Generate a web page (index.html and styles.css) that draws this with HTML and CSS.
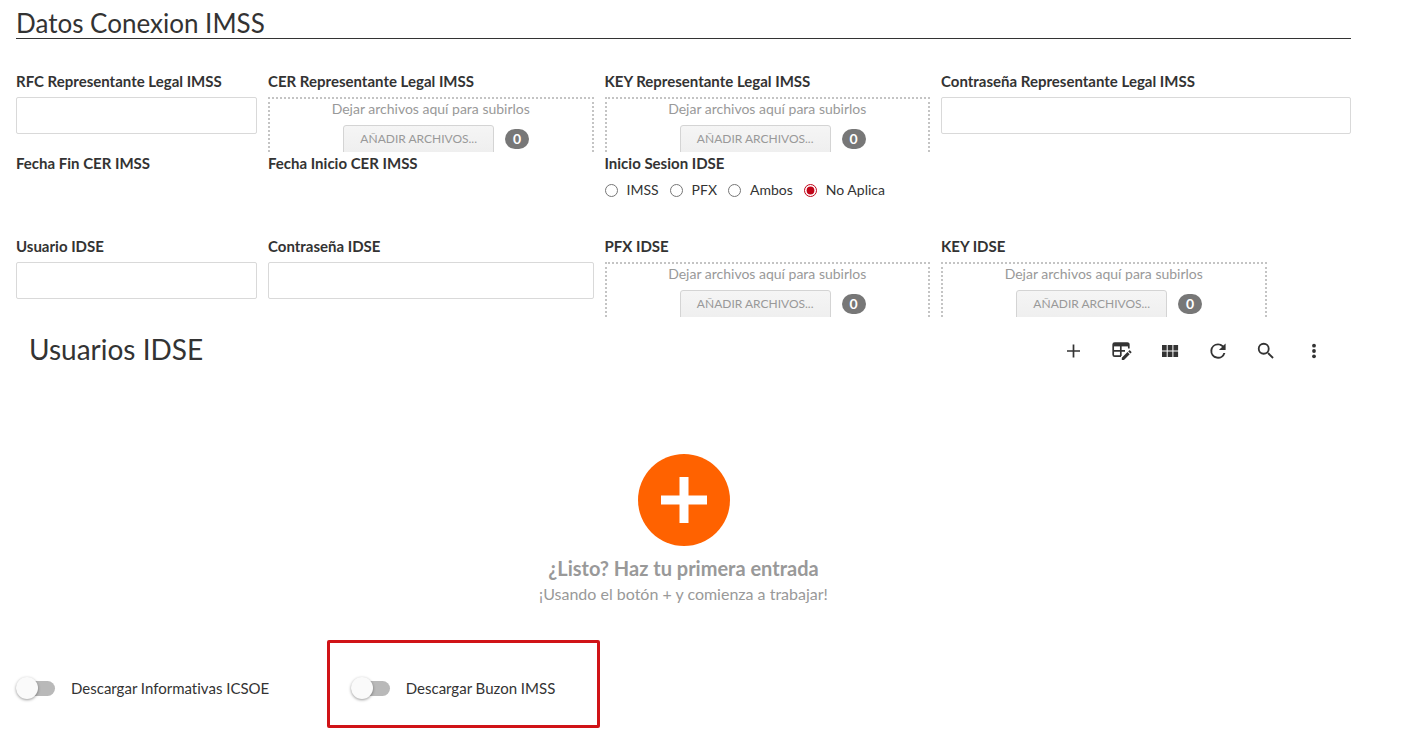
FILE: index.html
```html
<!DOCTYPE html>
<html lang="es">
<head>
<meta charset="utf-8">
<meta name="viewport" content="width=device-width, initial-scale=1">
<title>Datos Conexion IMSS</title>
<link rel="stylesheet" href="styles.css">
</head>
<body>
<main class="page">
  <h1 class="section-title">Datos Conexion IMSS</h1>

  <form class="form-grid">
    <div class="field">
      <label class="field-label" for="rfc">RFC Representante Legal IMSS</label>
      <input class="text-input" id="rfc" type="text">
    </div>
    <div class="field" role="group" aria-labelledby="cer-label">
      <span class="field-label" id="cer-label">CER Representante Legal IMSS</span>
      <div class="dropzone">
        <span class="dropzone-hint">Dejar archivos aquí para subirlos</span>
        <div class="dropzone-actions"><button class="add-files" type="button">AÑADIR ARCHIVOS...</button><span class="count">0</span></div>
      </div>
    </div>
    <div class="field" role="group" aria-labelledby="key-label">
      <span class="field-label" id="key-label">KEY Representante Legal IMSS</span>
      <div class="dropzone">
        <span class="dropzone-hint">Dejar archivos aquí para subirlos</span>
        <div class="dropzone-actions"><button class="add-files" type="button">AÑADIR ARCHIVOS...</button><span class="count">0</span></div>
      </div>
    </div>
    <div class="field field-wide">
      <label class="field-label" for="rep-pass">Contraseña Representante Legal IMSS</label>
      <input class="text-input" id="rep-pass" type="password">
    </div>

    <div class="field row-start"><span class="field-label">Fecha Fin CER IMSS</span></div>
    <div class="field"><span class="field-label">Fecha Inicio CER IMSS</span></div>
    <div class="field field-wide" role="radiogroup" aria-labelledby="login-label">
      <span class="field-label" id="login-label">Inicio Sesion IDSE</span>
      <div class="radios">
        <label class="radio-option"><input class="radio" type="radio" name="login">IMSS</label>
        <label class="radio-option"><input class="radio" type="radio" name="login">PFX</label>
        <label class="radio-option"><input class="radio" type="radio" name="login">Ambos</label>
        <label class="radio-option"><input class="radio" type="radio" name="login" checked>No Aplica</label>
      </div>
    </div>

    <div class="field row-start">
      <label class="field-label" for="idse-user">Usuario IDSE</label>
      <input class="text-input" id="idse-user" type="text">
    </div>
    <div class="field">
      <label class="field-label" for="idse-pass">Contraseña IDSE</label>
      <input class="text-input" id="idse-pass" type="password">
    </div>
    <div class="field" role="group" aria-labelledby="pfx-idse-label">
      <span class="field-label" id="pfx-idse-label">PFX IDSE</span>
      <div class="dropzone">
        <span class="dropzone-hint">Dejar archivos aquí para subirlos</span>
        <div class="dropzone-actions"><button class="add-files" type="button">AÑADIR ARCHIVOS...</button><span class="count">0</span></div>
      </div>
    </div>
    <div class="field" role="group" aria-labelledby="key-idse-label">
      <span class="field-label" id="key-idse-label">KEY IDSE</span>
      <div class="dropzone">
        <span class="dropzone-hint">Dejar archivos aquí para subirlos</span>
        <div class="dropzone-actions"><button class="add-files" type="button">AÑADIR ARCHIVOS...</button><span class="count">0</span></div>
      </div>
    </div>
  </form>

  <section class="users">
    <header class="users-header">
      <h2 class="users-title">Usuarios IDSE</h2>
      <div class="toolbar">
        <button class="tool" type="button" aria-label="Agregar"><svg class="icon" viewBox="0 0 20 20"><path d="M9.500 3.500v13M3 10h13" fill="none" stroke="currentColor" stroke-width="1.700"/></svg></button>
        <button class="tool" type="button" aria-label="Editar en tabla"><svg class="icon" viewBox="0 0 20 20"><path d="M9 15.200H2.700a1.500 1.500 0 0 1-1.500-1.500V3.500A1.500 1.500 0 0 1 2.700 2h12.600a1.500 1.500 0 0 1 1.500 1.500V7.500M1.500 9.800h11.500M8.800 4v11" fill="none" stroke="currentColor" stroke-width="1.700"/><path d="M1 2h16v3.400H1z" fill="currentColor"/><path d="M9.800 16.800l5.700-5.700 2.200 2.200-5.700 5.700H9.800zM16.200 10.400l.9-.9c.3-.3.700-.3 1 0l1.200 1.200c.3.300.3.700 0 1l-.9.900z" fill="currentColor"/></svg></button>
        <button class="tool" type="button" aria-label="Cuadrícula"><svg class="icon" viewBox="0 0 20 20"><path d="M2 4h4.700v5.400H2zM7.700 4h4.700v5.400H7.700zM13.400 4h4.700v5.400h-4.700zM2 10.500h4.700v5.400H2zM7.700 10.500h4.700v5.400H7.700zM13.400 10.500h4.700v5.400h-4.700z" fill="currentColor"/></svg></button>
        <button class="tool" type="button" aria-label="Actualizar"><svg class="icon" viewBox="1.500 1.500 21 21"><path d="M17.650 6.350A7.960 7.960 0 0 0 12 4a8 8 0 1 0 7.730 10h-2.080A6 6 0 1 1 12 6c1.660 0 3.140.69 4.220 1.780L13 11h7V4z" fill="currentColor"/></svg></button>
        <button class="tool" type="button" aria-label="Buscar"><svg class="icon" viewBox="1 1 22 22"><path d="M15.500 14h-.79l-.28-.27A6.470 6.470 0 0 0 16 9.500 6.500 6.500 0 1 0 9.500 16c1.610 0 3.090-.59 4.230-1.570l.27.28v.79l5 4.990L20.490 19zm-6 0a4.500 4.500 0 1 1 0-9 4.500 4.500 0 0 1 0 9z" fill="currentColor"/></svg></button>
        <button class="tool" type="button" aria-label="Más opciones"><svg class="icon" viewBox="0 0 20 20"><g fill="currentColor"><circle cx="10" cy="4.700" r="1.900"/><circle cx="10" cy="10" r="1.900"/><circle cx="10" cy="15.300" r="1.900"/></g></svg></button>
      </div>
    </header>
    <div class="empty">
      <button class="empty-add" type="button" aria-label="Agregar primera entrada"><svg class="empty-icon" viewBox="0 0 92 92"><circle cx="46" cy="46" r="46" fill="#ff6200"/><path d="M46 23v46M23 46h46" stroke="#fff" stroke-width="9" fill="none"/></svg></button>
      <p class="empty-title">¿Listo? Haz tu primera entrada</p>
      <p class="empty-text">¡Usando el botón + y comienza a trabajar!</p>
    </div>
  </section>

  <div class="switches">
    <label class="switch-option"><input class="switch" type="checkbox" role="switch">Descargar Informativas ICSOE</label>
    <label class="switch-option highlighted"><input class="switch" type="checkbox" role="switch">Descargar Buzon IMSS</label>
  </div>
</main>
</body>
</html>
```
FILE: styles.css
```css
*,
*::before,
*::after {
  box-sizing: border-box;
}

body {
  margin: 0;
  background: #fff;
  color: #333;
  font-family: Lato, "Liberation Sans", sans-serif;
  font-size: 15px;
  font-variant-ligatures: none;
  line-height: 20px;
}

button,
input {
  font: inherit;
}

.page {
  min-height: 100vh;
  padding: 8px 58px 38px 16px;
}

.section-title {
  margin: 0 0 32px;
  border-bottom: 1px solid #333;
  font-size: 26px;
  font-weight: 400;
  line-height: 30px;
}

.form-grid {
  display: grid;
  grid-template-columns: 482fr 651fr 651fr 651fr 147fr;
  grid-template-rows: auto 82px auto;
  column-gap: 11px;
  row-gap: 1px;
}

.field {
  display: flex;
  flex-direction: column;
  gap: 6px;
  min-width: 0;
}

.field-wide {
  grid-column: span 2;
}

.row-start {
  grid-column-start: 1;
}

.field-label {
  font-weight: 700;
  white-space: nowrap;
}

.text-input {
  width: 100%;
  height: 37px;
  padding: 0 8px;
  border: 1px solid #d9d9d9;
  border-radius: 2px;
  background: #fff;
}

.dropzone {
  display: flex;
  flex-direction: column;
  align-items: center;
  gap: 6px;
  height: 55px;
  overflow: hidden;
  border: 2px dotted #c4c4c4;
  border-bottom: 0;
  color: #999;
}

.dropzone-hint {
  font-size: 14px;
}

.dropzone-actions {
  display: flex;
  align-items: flex-start;
  gap: 11px;
  margin-left: 11px;
}

.add-files {
  flex-shrink: 0;
  height: 32px;
  padding: 0 16px 4px;
  border: 1px solid #d4d4d4;
  border-radius: 3px;
  background: linear-gradient(#f5f5f5, #eee);
  color: #999;
  font-size: 12px;
  white-space: nowrap;
}

.count {
  margin-top: 4px;
  padding: 0 8px;
  border-radius: 10px;
  background: #777;
  color: #fff;
  font-size: 14px;
  font-weight: 700;
}

.radios {
  display: flex;
  gap: 11px;
  font-size: 14px;
}

.radio-option {
  display: flex;
  align-items: center;
  gap: 9px;
  line-height: 22px;
}

.radio {
  width: 13px;
  height: 13px;
  margin: 0;
  accent-color: #c00418;
}

.users {
  padding: 15px 0 0 13px;
}

.users-header {
  display: flex;
  align-items: flex-start;
  justify-content: space-between;
  padding-right: 17px;
}

.users-title {
  margin: 0;
  font-size: 28px;
  font-weight: 400;
  line-height: 34px;
}

.toolbar {
  display: flex;
  gap: 8px;
}

.tool {
  display: grid;
  place-items: center;
  width: 40px;
  height: 38px;
  padding: 0;
  border: 0;
  background: none;
  color: #333;
}

.icon {
  width: 20px;
  height: 20px;
}

.empty {
  display: flex;
  flex-direction: column;
  align-items: center;
  padding: 84px 13px 0 0;
  color: #999;
}

.empty-add {
  padding: 0;
  border: 0;
  background: none;
}

.empty-icon {
  display: block;
  width: 92px;
  height: 92px;
}

.empty-title {
  margin: 10px 0 0;
  font-size: 20px;
  font-weight: 700;
  line-height: 25px;
}

.empty-text {
  margin: 0;
  font-size: 16px;
  line-height: 26px;
}

.switches {
  display: grid;
  grid-template-columns: repeat(4, 1fr);
  column-gap: 4px;
  margin-top: 70px;
}

.switch-option {
  display: flex;
  align-items: center;
  gap: 16px;
  height: 22px;
  white-space: nowrap;
}

.switch {
  display: flex;
  align-items: center;
  width: 39px;
  height: 15px;
  margin: 0;
  border-radius: 8px;
  background: #b9b9b9;
  appearance: none;
}

.switch::before {
  width: 22px;
  height: 22px;
  flex-shrink: 0;
  border-radius: 50%;
  background: #fafafa;
  box-shadow: 0 1px 3px rgba(0, 0, 0, 0.4);
  content: "";
}

.switch:checked {
  justify-content: flex-end;
}

.highlighted {
  position: relative;
}

.highlighted::after {
  position: absolute;
  top: -37px;
  left: -24px;
  width: 273px;
  height: 88px;
  border: 3px solid #d01317;
  border-radius: 2px;
  content: "";
  pointer-events: none;
}
```
